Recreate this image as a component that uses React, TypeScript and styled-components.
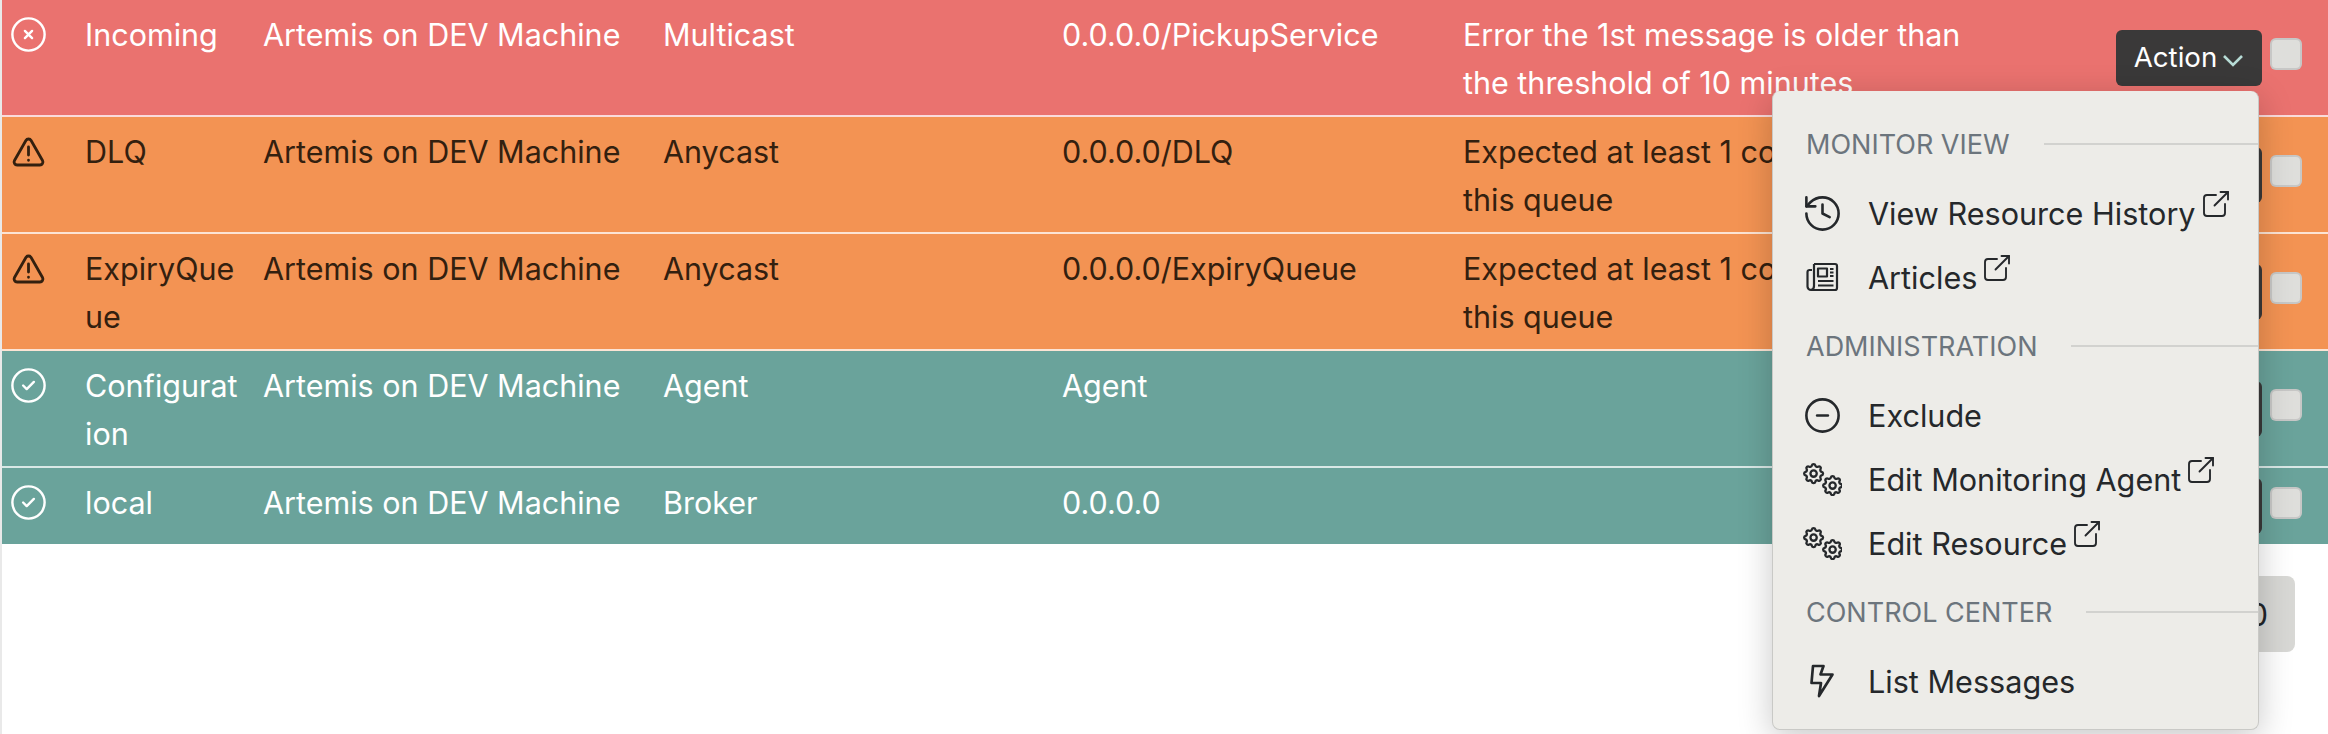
import React from 'react';
import styled, { createGlobalStyle } from 'styled-components';
import { History } from 'lucide-react';
import {
  TbCircleCheck,
  TbCircleMinus,
  TbCircleX,
  TbExternalLink,
} from 'react-icons/tb';

const GlobalStyle = createGlobalStyle`
  html, body {
    margin: 0;
    padding: 0;
    background: #fff;
    overflow: hidden;
  }
  body {
    font-family: Inter, "Liberation Sans", sans-serif;
    color: #212529;
  }
`;

const Page = styled.div`
  position: relative;
  width: 2328px;
  height: 734px;
  box-sizing: border-box;
  border-left: 2px solid #e9e9e9;
  overflow: hidden;
`;

type Tone = 'danger' | 'warning' | 'ok';

const toneColors: Record<Tone, { bg: string; fg: string }> = {
  danger: { bg: '#ea726f', fg: '#ffffff' },
  warning: { bg: '#f39353', fg: '#33200f' },
  ok: { bg: '#6aa39b', fg: '#ffffff' },
};

const Row = styled.div<{ $tone: Tone; $last: boolean }>`
  display: grid;
  grid-template-columns: 71px 178px 400px 399px 401px 530px 1fr;
  background: ${(p) => toneColors[p.$tone].bg};
  color: ${(p) => toneColors[p.$tone].fg};
  border-bottom: ${(p) => (p.$last ? 'none' : '2px solid rgba(255, 255, 255, 0.75)')};
  font-size: 30.5px;
  line-height: 48px;
`;

const Cell = styled.div`
  padding: 11px 12px 8px;
  word-break: break-word;
`;

const NameCell = styled(Cell)`
  word-break: break-all;
`;

const IconCell = styled.div`
  padding: 13px 0 0 5px;
  font-size: 43px;
  line-height: 0;

  svg {
    stroke-width: 1.35;
  }
`;

const WarningSvg = styled.svg`
  width: 33px;
  height: 30px;
  margin: 7px 0 0 5px;
  fill: none;
  stroke: currentColor;
  stroke-linecap: round;
  stroke-linejoin: round;

  && {
    stroke-width: 2.8;
  }
`;

const ActionCell = styled.div`
  display: flex;
  align-items: center;
  justify-content: flex-end;
  gap: 8px;
  padding: 10px 26px 10px 0;
`;

const ActionButton = styled.button`
  display: inline-flex;
  align-items: center;
  justify-content: center;
  gap: 5px;
  width: 146px;
  height: 56px;
  padding: 0 0 2px;
  border: none;
  border-radius: 6px;
  background: #3a3939;
  color: #fff;
  font: inherit;
  font-size: 27.7px;
`;

const Chevron = styled.svg`
  width: 22px;
  height: 14px;
  margin-top: 9px;
  fill: none;
  stroke: #b7dcd6;
  stroke-width: 2.6;
`;

const Check = styled.span`
  width: 32px;
  height: 32px;
  margin-top: -7px;
  box-sizing: border-box;
  border: 2px solid rgba(190, 190, 190, 0.7);
  border-radius: 6px;
  background: #dededb;
`;

const Footer = styled.div`
  display: flex;
  justify-content: flex-end;
  padding: 32px 33px 0 0;
`;

const PageButton = styled.div`
  display: flex;
  align-items: center;
  justify-content: flex-end;
  width: 200px;
  height: 76px;
  padding-right: 27px;
  box-sizing: border-box;
  border-radius: 8px;
  background: #d8d8d5;
  font-size: 30.5px;
`;

const Menu = styled.div`
  position: absolute;
  top: 91px;
  right: 69px;
  width: 487px;
  height: 639px;
  box-sizing: border-box;
  padding-top: 33px;
  border: 1px solid #c9c9c6;
  border-top: none;
  border-radius: 8px;
  background: #edece8;
  box-shadow: 0 8px 34px rgba(0, 0, 0, 0.22);
`;

const SectionHead = styled.div`
  display: flex;
  align-items: center;
  gap: 34px;
  height: 40px;
  margin: 17px 0;
  padding-left: 33px;
  color: #6c757d;
  font-size: 27px;

  &:first-child {
    margin-top: 0;
  }
`;

const SectionRule = styled.span`
  flex: 1;
  height: 2px;
  background: #d2d2cf;
`;

const Item = styled.div`
  display: flex;
  align-items: center;
  height: 64px;
  padding-left: 33px;
  color: #25282b;
  font-size: 30.6px;
`;

const ItemIcon = styled.span`
  display: flex;
  flex: none;
  justify-content: center;
  width: 32px;
  margin-right: 30px;
  font-size: 43px;

  svg {
    flex: none;
    stroke-width: 1.45;
  }
`;

const Outward = styled.span`
  display: inline-flex;
  margin: -18px 0 0 2px;
  font-size: 36px;

  svg {
    stroke-width: 1.25;
  }
`;

const GearsSvg = styled.svg`
  width: 40px;
  height: 34px;
  fill: none;
  stroke: currentColor;

  && {
    stroke-width: 2.2;
  }
`;

const NewsSvg = styled.svg`
  width: 33px;
  height: 30px;
  fill: none;
  stroke: currentColor;
  stroke-linejoin: round;

  && {
    stroke-width: 2.2;
  }
`;

const BoltSvg = styled.svg`
  width: 26px;
  height: 34px;
  fill: none;
  stroke: currentColor;
  stroke-linejoin: round;

  && {
    stroke-width: 2.7;
  }
`;

const GEAR =
  'M10.325 4.317c.426 -1.756 2.924 -1.756 3.35 0a1.724 1.724 0 0 0 2.573 1.066c1.543 -.94 3.31 .826 2.37 2.37a1.724 1.724 0 0 0 1.065 2.572c1.756 .426 1.756 2.924 0 3.35a1.724 1.724 0 0 0 -1.066 2.573c.94 1.543 -.826 3.31 -2.37 2.37a1.724 1.724 0 0 0 -2.572 1.065c-.426 1.756 -2.924 1.756 -3.35 0a1.724 1.724 0 0 0 -2.573 -1.066c-1.543 .94 -3.31 -.826 -2.37 -2.37a1.724 1.724 0 0 0 -1.065 -2.572c-1.756 -.426 -1.756 -2.924 0 -3.35a1.724 1.724 0 0 0 1.066 -2.573c-.94 -1.543 .826 -3.31 2.37 -2.37c1 .608 2.296 .07 2.572 -1.065z';

const Gears = () => (
  <GearsSvg viewBox="0 0 40 34">
    <g transform="translate(-1 -1) scale(1.05)">
      <path d={GEAR} />
      <circle cx="12" cy="12" r="3" />
    </g>
    <g transform="translate(18 11) scale(1.05)">
      <path d={GEAR} />
      <circle cx="12" cy="12" r="3" />
    </g>
  </GearsSvg>
);

const News = () => (
  <NewsSvg viewBox="0 0 33 30">
    <path d="M8 2h21a2 2 0 0 1 2 2v22a2 2 0 0 1-2 2H5a3.5 3.5 0 0 1-3.5-3.5V10a2 2 0 0 1 2-2H6" />
    <path d="M8 2v22a4 4 0 0 1-3 4" />
    <rect x="12" y="6.5" width="9" height="8" />
    <path d="M24 7h3.5M24 10.5h3.5M24 14h3.5M12 19h15.5M12 23.5h15.5" />
  </NewsSvg>
);

const Bolt = () => (
  <BoltSvg viewBox="0 0 26 34">
    <path d="M4 2h10.5l-3 8.5h12L10 32l2-13H2.5z" />
  </BoltSvg>
);

const Warning = () => (
  <WarningSvg viewBox="0 0 33 30">
    <path d="M16.5 2a3 3 0 0 1 2.6 1.5l11.4 20a3 3 0 0 1-2.6 4.5H5.1a3 3 0 0 1-2.6-4.5l11.4-20A3 3 0 0 1 16.5 2z" />
    <path d="M16.5 10v8M16.5 23.2v.1" />
  </WarningSvg>
);

const rows: { tone: Tone; name: string; type: string; address: string; message?: string }[] = [
  {
    tone: 'danger',
    name: 'Incoming',
    type: 'Multicast',
    address: '0.0.0.0/PickupService',
    message: 'Error the 1st message is older than the threshold of 10 minutes',
  },
  {
    tone: 'warning',
    name: 'DLQ',
    type: 'Anycast',
    address: '0.0.0.0/DLQ',
    message: 'Expected at least 1 consumer for this queue',
  },
  {
    tone: 'warning',
    name: 'ExpiryQueue',
    type: 'Anycast',
    address: '0.0.0.0/ExpiryQueue',
    message: 'Expected at least 1 consumer for this queue',
  },
  { tone: 'ok', name: 'Configuration', type: 'Agent', address: 'Agent' },
  { tone: 'ok', name: 'local', type: 'Broker', address: '0.0.0.0' },
];

const toneIcon = (tone: Tone) => {
  if (tone === 'danger') return <TbCircleX />;
  if (tone === 'warning') return <Warning />;
  return <TbCircleCheck />;
};

export default function App() {
  return (
    <Page>
      <GlobalStyle />
      {rows.map((row, i) => (
        <Row key={row.name} $tone={row.tone} $last={i === rows.length - 1}>
          <IconCell>{toneIcon(row.tone)}</IconCell>
          <NameCell>{row.name}</NameCell>
          <Cell>Artemis on DEV Machine</Cell>
          <Cell>{row.type}</Cell>
          <Cell>{row.address}</Cell>
          <Cell>{row.message}</Cell>
          <ActionCell>
            <ActionButton>
              Action
              <Chevron viewBox="0 0 22 14">
                <path d="M2 2l9 9 9-9" />
              </Chevron>
            </ActionButton>
            <Check />
          </ActionCell>
        </Row>
      ))}
      <Footer>
        <PageButton>10</PageButton>
      </Footer>
      <Menu>
        <SectionHead>
          MONITOR VIEW
          <SectionRule />
        </SectionHead>
        <Item>
          <ItemIcon><History size={43} /></ItemIcon>
          View Resource History
          <Outward><TbExternalLink /></Outward>
        </Item>
        <Item>
          <ItemIcon><News /></ItemIcon>
          Articles
          <Outward><TbExternalLink /></Outward>
        </Item>
        <SectionHead>
          ADMINISTRATION
          <SectionRule />
        </SectionHead>
        <Item>
          <ItemIcon><TbCircleMinus /></ItemIcon>
          Exclude
        </Item>
        <Item>
          <ItemIcon><Gears /></ItemIcon>
          Edit Monitoring Agent
          <Outward><TbExternalLink /></Outward>
        </Item>
        <Item>
          <ItemIcon><Gears /></ItemIcon>
          Edit Resource
          <Outward><TbExternalLink /></Outward>
        </Item>
        <SectionHead>
          CONTROL CENTER
          <SectionRule />
        </SectionHead>
        <Item>
          <ItemIcon><Bolt /></ItemIcon>
          List Messages
        </Item>
      </Menu>
    </Page>
  );
}
